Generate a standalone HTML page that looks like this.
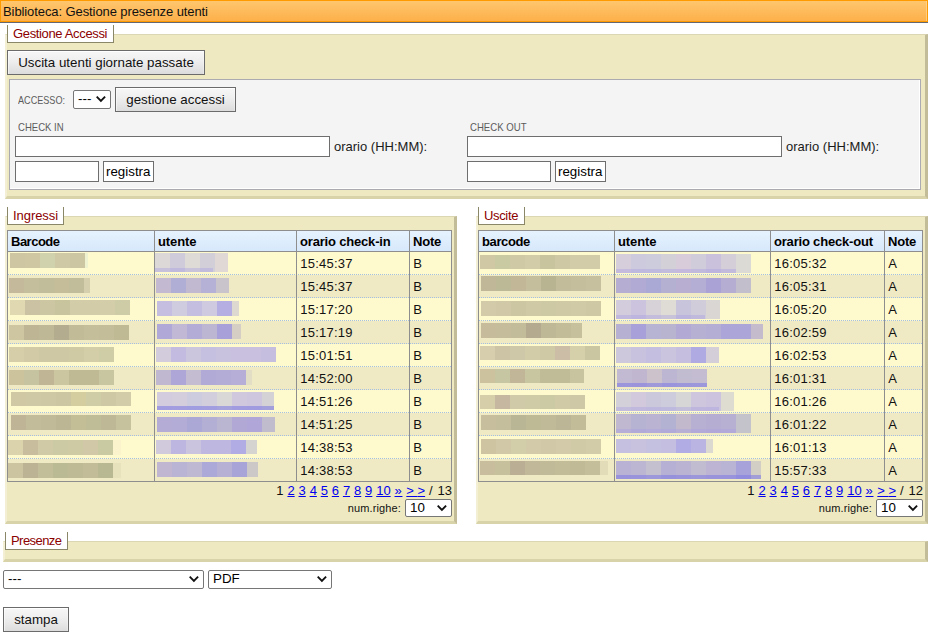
<!DOCTYPE html>
<html lang="it"><head><meta charset="utf-8"><title>Biblioteca: Gestione presenze utenti</title>
<style>
html,body{margin:0;padding:0;background:#fff;}
body{width:928px;height:637px;position:relative;overflow:hidden;font-family:"Liberation Sans",sans-serif;font-size:13px;color:#000;}
div,span,a{box-sizing:content-box}
.abs,.fs,.lg,.btn,.inp,.sel,.lbl,.tbl,.th,.ht,.row,.tt,.bk,.vd,.pg,.nr,.txt{position:absolute}
#hdr{position:absolute;left:0;top:0;width:926px;height:20px;border:1px solid #ff9a00;box-shadow:0 1px 0 #646870, inset -1px 0 0 rgba(255,220,160,.6);background:linear-gradient(#ffc66e,#fdb04a);}
#hdr span{position:absolute;left:2px;top:3px;font-size:13px;line-height:15px;letter-spacing:-0.09px;color:#111}
.fs{background:#eee9c1;border-style:solid;border-width:1px 3px 3px 2px;border-color:#dcd7b3 #c3bc98 #d9d3a9 #f3efd4;}
.lg{background:#fff;border:1px solid #8a8668;border-top:none;height:17px;font-size:13px;line-height:15px;color:#8b0000;white-space:nowrap}
.lg span{position:absolute;left:5px;top:1px}
.btn{border:1px solid #6b6b6b;background:linear-gradient(#f7f7f7,#eeeeee 45%,#dcdcdc);box-shadow:inset 0 1px 0 rgba(255,255,255,.9),inset 1px 0 0 rgba(255,255,255,.5),inset -1px 0 0 rgba(255,255,255,.3);font-size:13.333px;line-height:15px;text-align:center;color:#111;white-space:nowrap}
.inp{background:#fff;border:1px solid #6e6e6e;height:19px}
.inp span{position:absolute;left:2px;top:2px;font-size:13.333px;line-height:15px}
.sel{background:#fff;border:1px solid #767676;border-radius:2px;font-size:13.333px;line-height:15px}
.sel span{position:absolute;top:0px}
.ar{position:absolute;right:4px;top:5px;width:10px;height:6px;fill:none;stroke:#111;stroke-width:1.85;overflow:visible}
.lbl{font-size:11px;line-height:13px;color:#5c5c5c;white-space:nowrap;transform-origin:0 0}
.txt{font-size:13px;line-height:15px;color:#1a1a1a;white-space:nowrap}
#panel{position:absolute;left:9px;top:79px;width:910px;height:109px;border:1px solid #aaaab0;background:#f4f4f4;box-shadow:inset -1px -1px 0 #fff}
.tbl{border:1px solid #8e8e8e;background:#fff8cc;overflow:hidden}
.th{background:linear-gradient(#e6f2fe,#d7e8fb);border-bottom:1px solid #8e8e8e}
.ht{font-weight:bold;font-size:13px;line-height:15px;white-space:nowrap}
.row{left:0;height:22px;border-bottom:1px dotted #a4bfe2}
.row.last{border-bottom:none}
.ry{background:#fff9ce}
.rb{background:#f0eac4}
.tt{font-size:13px;line-height:15px;white-space:nowrap;color:#111;letter-spacing:.24px;margin-left:.2px}
.vd{top:0;width:1px;height:250px;background:#8e8e8e}
.pg{font-size:13px;line-height:15px;white-space:nowrap;color:#111;word-spacing:0.24px}
.pg a{color:#0000ee;text-decoration:underline}
.nr{font-size:11px;line-height:13px;white-space:nowrap;color:#111;letter-spacing:.12px}
</style></head><body>
<div id="hdr"><span>Biblioteca: Gestione presenze utenti</span></div>

<div class="fs" style="left:5px;top:34px;width:918px;height:161px"></div>
<div class="lg" style="left:7px;top:25px;width:105px"><span style="letter-spacing:-0.35px">Gestione Accessi</span></div>
<div class="btn" style="left:7px;top:50px;width:196px;height:23px"><span style="position:relative;top:4px">Uscita utenti giornate passate</span></div>
<div id="panel"></div>
<div class="lbl" style="left:18px;top:94px;transform:scaleX(.827)">ACCESSO:</div>
<div class="sel" style="left:73px;top:90px;width:36px;height:17px"><span style="left:4px">---</span><svg class="ar" viewBox="0 0 10 6"><path d="M0.7 0.7 L4.9 5 L9.1 0.7"/></svg></div>
<div class="btn" style="left:115px;top:87px;width:119px;height:23px"><span style="position:relative;top:4px">gestione accessi</span></div>

<div class="lbl" style="left:18px;top:121px;transform:scaleX(.868)">CHECK IN</div>
<div class="inp" style="left:15px;top:136px;width:313px"></div>
<div class="txt" style="left:334px;top:139px">orario (HH:MM):</div>
<div class="inp" style="left:15px;top:161px;width:82px"></div>
<div class="inp" style="left:103px;top:161px;width:49px"><span>registra</span></div>

<div class="lbl" style="left:470px;top:121px;transform:scaleX(.872)">CHECK OUT</div>
<div class="inp" style="left:467px;top:136px;width:313px"></div>
<div class="txt" style="left:786px;top:139px">orario (HH:MM):</div>
<div class="inp" style="left:467px;top:161px;width:82px"></div>
<div class="inp" style="left:555px;top:161px;width:49px"><span>registra</span></div>

<div class="fs" style="left:5px;top:216px;width:447px;height:304px"></div>
<div class="lg" style="left:7px;top:207px;width:55px"><span style="letter-spacing:-0.06px">Ingressi</span></div>
<div class="tbl" style="left:7px;top:230px;width:443px;height:250px">
<div class="th" style="left:0;top:0;width:443px;height:20px"></div>
<div class="ht" style="left:3px;top:3px;letter-spacing:-0.5px">Barcode</div>
<div class="ht" style="left:150px;top:3px;letter-spacing:-0.08px">utente</div>
<div class="ht" style="left:292px;top:3px;letter-spacing:-0.18px">orario check-in</div>
<div class="ht" style="left:405px;top:3px;letter-spacing:-0.22px">Note</div>
<div class="row ry" style="top:21px;width:443px"></div>
<div class="tt" style="left:292px;top:25px">15:45:37</div>
<div class="tt" style="left:405px;top:25px">B</div>
<div class="bk" style="left:2px;top:22px;width:75px;height:15px;background:linear-gradient(90deg,#cec5a3 0px,#cec5a3 15px,#cfc7a2 15px,#cfc7a2 30px,#d0d1ad 30px,#d0d1ad 45px,#cfc9a5 45px,#cfc9a5 60px,#cdc6a2 60px,#cdc6a2 75px)"></div>
<div class="bk" style="left:77px;top:22px;width:3px;height:15px;background:#eef2ce"></div>
<div class="bk" style="left:147px;top:22px;width:73px;height:19px;background:linear-gradient(90deg,rgba(170,160,225,.42) 58px,transparent 58px) 0 15px/100% 4px no-repeat,linear-gradient(90deg,#ddd8d8 0px,#ddd8d8 15px,#cfcbdb 15px,#cfcbdb 30px,#dedbd6 30px,#dedbd6 45px,#d2cfd9 45px,#d2cfd9 60px,#e0d8d4 60px,#e0d8d4 73px)"></div>
<div class="row rb" style="top:44px;width:443px"></div>
<div class="tt" style="left:292px;top:48px">15:45:37</div>
<div class="tt" style="left:405px;top:48px">B</div>
<div class="bk" style="left:1px;top:47px;width:81px;height:15px;background:linear-gradient(90deg,#c4b99a 0px,#c4b99a 15px,#c4be9c 15px,#c4be9c 30px,#c1bc9a 30px,#c1bc9a 45px,#c5bc99 45px,#c5bc99 60px,#c1bc9a 60px,#c1bc9a 75px,#d6cfae 75px,#d6cfae 81px)"></div>
<div class="bk" style="left:148px;top:47px;width:73px;height:15px;background:linear-gradient(90deg,#c3b9d0 0px,#c3b9d0 15px,#b0aed4 15px,#b0aed4 30px,#c1b9d0 30px,#c1b9d0 45px,#b4b0d6 45px,#b4b0d6 60px,#c9c4cc 60px,#c9c4cc 73px)"></div>
<div class="row ry" style="top:67px;width:443px"></div>
<div class="tt" style="left:292px;top:71px">15:17:20</div>
<div class="tt" style="left:405px;top:71px">B</div>
<div class="bk" style="left:2px;top:69px;width:120px;height:15px;background:linear-gradient(90deg,#dfd8b0 0px,#dfd8b0 15px,#cac2a2 15px,#cac2a2 30px,#ccc6a2 30px,#ccc6a2 45px,#c8c49e 45px,#c8c49e 60px,#d2cca8 60px,#d2cca8 75px,#d2cca8 75px,#d2cca8 90px,#d3cda9 90px,#d3cda9 105px,#cdcca6 105px,#cdcca6 120px)"></div>
<div class="bk" style="left:149px;top:70px;width:82px;height:15px;background:linear-gradient(90deg,#c5bee0 0px,#c5bee0 15px,#d0ccdf 15px,#d0ccdf 30px,#c4bee0 30px,#c4bee0 45px,#cfcadf 45px,#cfcadf 60px,#b5aee2 60px,#b5aee2 75px,#ddd8d0 75px,#ddd8d0 82px)"></div>
<div class="row rb" style="top:90px;width:443px"></div>
<div class="tt" style="left:292px;top:94px">15:17:19</div>
<div class="tt" style="left:405px;top:94px">B</div>
<div class="bk" style="left:1px;top:94px;width:120px;height:15px;background:linear-gradient(90deg,#cdc6a0 0px,#cdc6a0 15px,#bdb594 15px,#bdb594 30px,#bfb896 30px,#bfb896 45px,#b4ac8e 45px,#b4ac8e 60px,#c2bb98 60px,#c2bb98 75px,#c5be9b 75px,#c5be9b 90px,#c4bd9a 90px,#c4bd9a 105px,#bfb994 105px,#bfb994 120px)"></div>
<div class="bk" style="left:149px;top:93px;width:84px;height:15px;background:linear-gradient(90deg,#b0a8d6 0px,#b0a8d6 15px,#c0b8d4 15px,#c0b8d4 30px,#b2acd6 30px,#b2acd6 45px,#bdb6d2 45px,#bdb6d2 60px,#a8a0d8 60px,#a8a0d8 75px,#d4cec4 75px,#d4cec4 84px)"></div>
<div class="row ry" style="top:113px;width:443px"></div>
<div class="tt" style="left:292px;top:117px">15:01:51</div>
<div class="tt" style="left:405px;top:117px">B</div>
<div class="bk" style="left:1px;top:116px;width:105px;height:15px;background:linear-gradient(90deg,#d6cea8 0px,#d6cea8 15px,#d2caa6 15px,#d2caa6 30px,#cfc8a4 30px,#cfc8a4 45px,#cfc8a4 45px,#cfc8a4 60px,#d0caa4 60px,#d0caa4 75px,#d3cda8 75px,#d3cda8 90px,#cfcda6 90px,#cfcda6 105px)"></div>
<div class="bk" style="left:148px;top:116px;width:120px;height:15px;background:linear-gradient(90deg,#d2ccdc 0px,#d2ccdc 15px,#c4bce0 15px,#c4bce0 30px,#cbc5de 30px,#cbc5de 45px,#c6c0e0 45px,#c6c0e0 60px,#c8c2df 60px,#c8c2df 75px,#c8c0de 75px,#c8c0de 90px,#c8c0de 90px,#c8c0de 105px,#c6bede 105px,#c6bede 120px)"></div>
<div class="row rb" style="top:136px;width:443px"></div>
<div class="tt" style="left:292px;top:140px">14:52:00</div>
<div class="tt" style="left:405px;top:140px">B</div>
<div class="bk" style="left:1px;top:139px;width:105px;height:15px;background:linear-gradient(90deg,#ccc29c 0px,#ccc29c 15px,#c6c4a0 15px,#c6c4a0 30px,#c0b594 30px,#c0b594 45px,#ccc6a0 45px,#ccc6a0 60px,#bfba94 60px,#bfba94 75px,#bfba94 75px,#bfba94 90px,#c8c6a0 90px,#c8c6a0 105px)"></div>
<div class="bk" style="left:148px;top:139px;width:90px;height:15px;background:linear-gradient(90deg,#c0b8d0 0px,#c0b8d0 15px,#aea6d6 15px,#aea6d6 30px,#c4bcd0 30px,#c4bcd0 45px,#b2aad6 45px,#b2aad6 60px,#b2acd6 60px,#b2acd6 75px,#b6aed6 75px,#b6aed6 90px)"></div>
<div class="bk" style="left:238px;top:139px;width:6px;height:15px;background:#e2dec6"></div>
<div class="row ry" style="top:159px;width:443px"></div>
<div class="tt" style="left:292px;top:163px">14:51:26</div>
<div class="tt" style="left:405px;top:163px">B</div>
<div class="bk" style="left:3px;top:161px;width:120px;height:14px;background:linear-gradient(90deg,#d0c8a4 0px,#d0c8a4 15px,#cfc9a6 15px,#cfc9a6 30px,#cec8a4 30px,#cec8a4 45px,#cdc6a2 45px,#cdc6a2 60px,#d3cda0 60px,#d3cda0 75px,#cfcda6 75px,#cfcda6 90px,#cec8a4 90px,#cec8a4 105px,#d2cca8 105px,#d2cca8 120px)"></div>
<div class="bk" style="left:149px;top:161px;width:117px;height:18px;background:linear-gradient(90deg,rgba(130,125,225,.6) 117px,transparent 117px) 0 14px/100% 4px no-repeat,linear-gradient(90deg,#d2ccde 0px,#d2ccde 15px,#d4cedc 15px,#d4cedc 30px,#ccccde 30px,#ccccde 45px,#d2cedc 45px,#d2cedc 60px,#dad8d6 60px,#dad8d6 75px,#d0c8dc 75px,#d0c8dc 90px,#cec6de 90px,#cec6de 105px,#d4d2d4 105px,#d4d2d4 117px)"></div>
<div class="row rb" style="top:182px;width:443px"></div>
<div class="tt" style="left:292px;top:186px">14:51:25</div>
<div class="tt" style="left:405px;top:186px">B</div>
<div class="bk" style="left:3px;top:184px;width:120px;height:15px;background:linear-gradient(90deg,#c0b496 0px,#c0b496 15px,#c2bc9a 15px,#c2bc9a 30px,#c0ba98 30px,#c0ba98 45px,#bcb694 45px,#bcb694 60px,#c4be96 60px,#c4be96 75px,#bfbd98 75px,#bfbd98 90px,#beb896 90px,#beb896 105px,#c6c29e 105px,#c6c29e 120px)"></div>
<div class="bk" style="left:149px;top:186px;width:118px;height:15px;background:linear-gradient(90deg,#b4acd4 0px,#b4acd4 15px,#b2acd6 15px,#b2acd6 30px,#aca8d6 30px,#aca8d6 45px,#b2aed4 45px,#b2aed4 60px,#bab6d2 60px,#bab6d2 75px,#b2a8d6 75px,#b2a8d6 90px,#b0a6d8 90px,#b0a6d8 105px,#c0bcce 105px,#c0bcce 118px)"></div>
<div class="row ry" style="top:205px;width:443px"></div>
<div class="tt" style="left:292px;top:209px">14:38:53</div>
<div class="tt" style="left:405px;top:209px">B</div>
<div class="bk" style="left:0px;top:209px;width:105px;height:15px;background:linear-gradient(90deg,#dad3ac 0px,#dad3ac 15px,#c8be9e 15px,#c8be9e 30px,#d0caa6 30px,#d0caa6 45px,#cccaa4 45px,#cccaa4 60px,#cecaa4 60px,#cecaa4 75px,#d0c8a6 75px,#d0c8a6 90px,#cacaa2 90px,#cacaa2 105px)"></div>
<div class="bk" style="left:105px;top:209px;width:8px;height:15px;background:#fbf3cc"></div>
<div class="bk" style="left:148px;top:209px;width:101px;height:14px;background:linear-gradient(90deg,#d0cadc 0px,#d0cadc 15px,#bcb6e0 15px,#bcb6e0 30px,#cac4de 30px,#cac4de 45px,#beb8e0 45px,#beb8e0 60px,#beb8e0 60px,#beb8e0 75px,#b2ace4 75px,#b2ace4 90px,#d6d4d0 90px,#d6d4d0 101px)"></div>
<div class="row rb last" style="top:228px;width:443px"></div>
<div class="tt" style="left:292px;top:232px">14:38:53</div>
<div class="tt" style="left:405px;top:232px">B</div>
<div class="bk" style="left:0px;top:232px;width:105px;height:15px;background:linear-gradient(90deg,#ccc4a0 0px,#ccc4a0 15px,#bcb294 15px,#bcb294 30px,#c2be9a 30px,#c2be9a 45px,#baba94 45px,#baba94 60px,#bfba96 60px,#bfba96 75px,#c2bc98 75px,#c2bc98 90px,#b8b892 90px,#b8b892 105px)"></div>
<div class="bk" style="left:105px;top:232px;width:8px;height:15px;background:#e8e2bc"></div>
<div class="bk" style="left:149px;top:231px;width:101px;height:15px;background:linear-gradient(90deg,#c0b6d2 0px,#c0b6d2 15px,#bab4d4 15px,#bab4d4 30px,#beb8d2 30px,#beb8d2 45px,#aca8d8 45px,#aca8d8 60px,#b6b0d4 60px,#b6b0d4 75px,#a8a4d8 75px,#a8a4d8 90px,#ccc8c8 90px,#ccc8c8 101px)"></div>
<div class="vd" style="left:146px"></div>
<div class="vd" style="left:288px"></div>
<div class="vd" style="left:401px"></div>
</div>
<div class="pg" style="right:476px;top:483px">1 <a>2</a> <a>3</a> <a>4</a> <a>5</a> <a>6</a> <a>7</a> <a>8</a> <a>9</a> <a>10</a> <a style="letter-spacing:.7px">&raquo;</a> <a><span style="letter-spacing:3.6px">&gt;</span>&gt;</a> <span style="letter-spacing:1.1px">/</span> 13</div><div class="nr" style="right:527px;top:502px">num.righe:</div><div class="sel" style="left:405px;top:499px;width:45px;height:16px"><span style="left:4px">10</span><svg class="ar" viewBox="0 0 10 6"><path d="M0.7 0.7 L4.9 5 L9.1 0.7"/></svg></div>

<div class="fs" style="left:476px;top:216px;width:447px;height:304px"></div>
<div class="lg" style="left:478px;top:207px;width:45px"><span style="letter-spacing:-0.35px">Uscite</span></div>
<div class="tbl" style="left:478px;top:230px;width:443px;height:250px">
<div class="th" style="left:0;top:0;width:443px;height:20px"></div>
<div class="ht" style="left:3px;top:3px;letter-spacing:-0.37px">barcode</div>
<div class="ht" style="left:139px;top:3px;letter-spacing:-0.08px">utente</div>
<div class="ht" style="left:295px;top:3px;letter-spacing:-0.19px">orario check-out</div>
<div class="ht" style="left:409px;top:3px;letter-spacing:-0.22px">Note</div>
<div class="row ry" style="top:21px;width:443px"></div>
<div class="tt" style="left:295px;top:25px">16:05:32</div>
<div class="tt" style="left:409px;top:25px">A</div>
<div class="bk" style="left:1px;top:24px;width:120px;height:14px;background:linear-gradient(90deg,#d0c8a4 0px,#d0c8a4 15px,#cacaa2 15px,#cacaa2 30px,#cfc9a6 30px,#cfc9a6 45px,#d2cca8 45px,#d2cca8 60px,#c8c49e 60px,#c8c49e 75px,#cec8a4 75px,#cec8a4 90px,#d2cca8 90px,#d2cca8 105px,#d2cca8 105px,#d2cca8 120px)"></div>
<div class="bk" style="left:137px;top:23px;width:135px;height:19px;background:linear-gradient(90deg,rgba(170,160,225,.42) 120px,transparent 120px) 0 15px/100% 4px no-repeat,linear-gradient(90deg,#d6ceda 0px,#d6ceda 15px,#cccadc 15px,#cccadc 30px,#ccccdc 30px,#ccccdc 45px,#d4d0d8 45px,#d4d0d8 60px,#d8ccda 60px,#d8ccda 75px,#d0ccda 75px,#d0ccda 90px,#cac2dc 90px,#cac2dc 105px,#d4ced8 105px,#d4ced8 120px,#dcdad4 120px,#dcdad4 135px)"></div>
<div class="row rb" style="top:44px;width:443px"></div>
<div class="tt" style="left:295px;top:48px">16:05:31</div>
<div class="tt" style="left:409px;top:48px">A</div>
<div class="bk" style="left:2px;top:45px;width:120px;height:15px;background:linear-gradient(90deg,#c0b698 0px,#c0b698 15px,#bcba96 15px,#bcba96 30px,#c2b898 30px,#c2b898 45px,#c4be9c 45px,#c4be9c 60px,#b8b492 60px,#b8b492 75px,#c2bc9a 75px,#c2bc9a 90px,#c4be9c 90px,#c4be9c 105px,#c6c09e 105px,#c6c09e 120px)"></div>
<div class="bk" style="left:137px;top:47px;width:135px;height:15px;background:linear-gradient(90deg,#b6aed2 0px,#b6aed2 15px,#b0aad4 15px,#b0aad4 30px,#aaa8d4 30px,#aaa8d4 45px,#b4b0d2 45px,#b4b0d2 60px,#b8aed2 60px,#b8aed2 75px,#b4aed4 75px,#b4aed4 90px,#aaa2d4 90px,#aaa2d4 105px,#b6aed2 105px,#b6aed2 120px,#c2becc 120px,#c2becc 135px)"></div>
<div class="row ry" style="top:67px;width:443px"></div>
<div class="tt" style="left:295px;top:71px">16:05:20</div>
<div class="tt" style="left:409px;top:71px">A</div>
<div class="bk" style="left:2px;top:70px;width:120px;height:15px;background:linear-gradient(90deg,#d2caa8 0px,#d2caa8 15px,#d0c8a6 15px,#d0c8a6 30px,#ccc6a2 30px,#ccc6a2 45px,#cfc9a6 45px,#cfc9a6 60px,#cdc9a4 60px,#cdc9a4 75px,#cfc9a6 75px,#cfc9a6 90px,#d0caa6 90px,#d0caa6 105px,#cec8a4 105px,#cec8a4 120px)"></div>
<div class="bk" style="left:137px;top:69px;width:104px;height:19px;background:linear-gradient(90deg,rgba(170,160,225,.42) 89px,transparent 89px) 0 15px/100% 4px no-repeat,linear-gradient(90deg,#d2ccdc 0px,#d2ccdc 15px,#ccc4de 15px,#ccc4de 30px,#d6d2d8 30px,#d6d2d8 45px,#dedcd4 45px,#dedcd4 60px,#c8c4dc 60px,#c8c4dc 75px,#d0ccda 75px,#d0ccda 90px,#dad6d4 90px,#dad6d4 104px)"></div>
<div class="row rb" style="top:90px;width:443px"></div>
<div class="tt" style="left:295px;top:94px">16:02:59</div>
<div class="tt" style="left:409px;top:94px">A</div>
<div class="bk" style="left:2px;top:92px;width:101px;height:15px;background:linear-gradient(90deg,#c6bc9c 0px,#c6bc9c 15px,#c4bc9a 15px,#c4bc9a 30px,#c2bc9a 30px,#c2bc9a 45px,#b4aa90 45px,#b4aa90 60px,#beb896 60px,#beb896 75px,#c2bc98 75px,#c2bc98 90px,#c6c09c 90px,#c6c09c 101px)"></div>
<div class="bk" style="left:137px;top:93px;width:147px;height:15px;background:linear-gradient(90deg,#b6b0d2 0px,#b6b0d2 15px,#a8a0d8 15px,#a8a0d8 30px,#b6b4d2 30px,#b6b4d2 45px,#b8b4d0 45px,#b8b4d0 60px,#b2aad4 60px,#b2aad4 75px,#b6b0d2 75px,#b6b0d2 90px,#b4aed4 90px,#b4aed4 105px,#aca6d8 105px,#aca6d8 120px,#aca6d8 120px,#aca6d8 135px,#c4bccc 135px,#c4bccc 147px)"></div>
<div class="row ry" style="top:113px;width:443px"></div>
<div class="tt" style="left:295px;top:117px">16:02:53</div>
<div class="tt" style="left:409px;top:117px">A</div>
<div class="bk" style="left:1px;top:115px;width:120px;height:14px;background:linear-gradient(90deg,#d6ceac 0px,#d6ceac 15px,#ccc4a4 15px,#ccc4a4 30px,#cec8a8 30px,#cec8a8 45px,#d2cca8 45px,#d2cca8 60px,#cfc9a6 60px,#cfc9a6 75px,#ccbea6 75px,#ccbea6 90px,#d6d0aa 90px,#d6d0aa 105px,#cac6a2 105px,#cac6a2 120px)"></div>
<div class="bk" style="left:137px;top:116px;width:103px;height:16px;background:linear-gradient(90deg,#cec8dc 0px,#cec8dc 15px,#c8c2de 15px,#c8c2de 30px,#c4bee0 30px,#c4bee0 45px,#cac4de 45px,#cac4de 60px,#c6bede 60px,#c6bede 75px,#b0aae2 75px,#b0aae2 90px,#d4ced8 90px,#d4ced8 103px)"></div>
<div class="row rb" style="top:136px;width:443px"></div>
<div class="tt" style="left:295px;top:140px">16:01:31</div>
<div class="tt" style="left:409px;top:140px">A</div>
<div class="bk" style="left:1px;top:138px;width:104px;height:14px;background:linear-gradient(90deg,#ccc29e 0px,#ccc29e 15px,#c6c6a2 15px,#c6c6a2 30px,#c2b698 30px,#c2b698 45px,#c8c6a0 45px,#c8c6a0 60px,#c0bc98 60px,#c0bc98 75px,#c0bc98 75px,#c0bc98 90px,#c8c4a0 90px,#c8c4a0 104px)"></div>
<div class="bk" style="left:138px;top:138px;width:90px;height:18px;background:linear-gradient(90deg,rgba(130,125,225,.6) 90px,transparent 90px) 0 14px/100% 4px no-repeat,linear-gradient(90deg,#c2bad2 0px,#c2bad2 15px,#c0b6d0 15px,#c0b6d0 30px,#ccc2cc 30px,#ccc2cc 45px,#bcb6d2 45px,#bcb6d2 60px,#c2bcd0 60px,#c2bcd0 75px,#c4bcd0 75px,#c4bcd0 90px)"></div>
<div class="row ry" style="top:159px;width:443px"></div>
<div class="tt" style="left:295px;top:163px">16:01:26</div>
<div class="tt" style="left:409px;top:163px">A</div>
<div class="bk" style="left:1px;top:164px;width:105px;height:14px;background:linear-gradient(90deg,#d6cea8 0px,#d6cea8 15px,#c6b8a0 15px,#c6b8a0 30px,#d0caa8 30px,#d0caa8 45px,#cfcba6 45px,#cfcba6 60px,#cccaa4 60px,#cccaa4 75px,#d0caa6 75px,#d0caa6 90px,#cec8a6 90px,#cec8a6 105px)"></div>
<div class="bk" style="left:137px;top:161px;width:118px;height:19px;background:linear-gradient(90deg,rgba(170,160,225,.42) 103px,transparent 103px) 0 15px/100% 4px no-repeat,linear-gradient(90deg,#d4d0da 0px,#d4d0da 15px,#d2cadc 15px,#d2cadc 30px,#ccc8dc 30px,#ccc8dc 45px,#ccccdc 45px,#ccccdc 60px,#d6d6d6 60px,#d6d6d6 75px,#cec6dc 75px,#cec6dc 90px,#ccc4de 90px,#ccc4de 105px,#dedcd0 105px,#dedcd0 118px)"></div>
<div class="row rb" style="top:182px;width:443px"></div>
<div class="tt" style="left:295px;top:186px">16:01:22</div>
<div class="tt" style="left:409px;top:186px">A</div>
<div class="bk" style="left:2px;top:184px;width:105px;height:15px;background:linear-gradient(90deg,#c6be9c 0px,#c6be9c 15px,#c4be9c 15px,#c4be9c 30px,#b8b694 30px,#b8b694 45px,#beba96 45px,#beba96 60px,#c0ba98 60px,#c0ba98 75px,#bcb696 75px,#bcb696 90px,#c2bc98 90px,#c2bc98 105px)"></div>
<div class="bk" style="left:137px;top:183px;width:135px;height:19px;background:linear-gradient(90deg,rgba(170,160,225,.42) 120px,transparent 120px) 0 15px/100% 4px no-repeat,linear-gradient(90deg,#c0b8d0 0px,#c0b8d0 15px,#b6b2d2 15px,#b6b2d2 30px,#bab4d2 30px,#bab4d2 45px,#b4b2d2 45px,#b4b2d2 60px,#c2bacc 60px,#c2bacc 75px,#b8b0d2 75px,#b8b0d2 90px,#b6aed2 90px,#b6aed2 105px,#b8b0d2 105px,#b8b0d2 120px,#c4c2ca 120px,#c4c2ca 135px)"></div>
<div class="row ry" style="top:205px;width:443px"></div>
<div class="tt" style="left:295px;top:209px">16:01:13</div>
<div class="tt" style="left:409px;top:209px">A</div>
<div class="bk" style="left:2px;top:208px;width:120px;height:15px;background:linear-gradient(90deg,#cec4a2 0px,#cec4a2 15px,#d0c8a6 15px,#d0c8a6 30px,#d2ceaa 30px,#d2ceaa 45px,#d2caa8 45px,#d2caa8 60px,#d0c8a6 60px,#d0c8a6 75px,#d2caa8 75px,#d2caa8 90px,#d0caa6 90px,#d0caa6 105px,#d2cca8 105px,#d2cca8 120px)"></div>
<div class="bk" style="left:137px;top:208px;width:97px;height:14px;background:linear-gradient(90deg,#c6c0e0 0px,#c6c0e0 15px,#c8c2de 15px,#c8c2de 30px,#c4c0e0 30px,#c4c0e0 45px,#c4bee0 45px,#c4bee0 60px,#b2ace4 60px,#b2ace4 75px,#bab4e2 75px,#bab4e2 90px,#dcdad0 90px,#dcdad0 97px)"></div>
<div class="row rb last" style="top:228px;width:443px"></div>
<div class="tt" style="left:295px;top:232px">15:57:33</div>
<div class="tt" style="left:409px;top:232px">A</div>
<div class="bk" style="left:1px;top:230px;width:120px;height:14px;background:linear-gradient(90deg,#c8be9e 0px,#c8be9e 15px,#c6c09c 15px,#c6c09c 30px,#baae94 30px,#baae94 45px,#c0b898 45px,#c0b898 60px,#c0ba98 60px,#c0ba98 75px,#c2bc98 75px,#c2bc98 90px,#c0ba96 90px,#c0ba96 105px,#c4be9a 105px,#c4be9a 120px)"></div>
<div class="bk" style="left:121px;top:230px;width:8px;height:14px;background:#e2dcb8"></div>
<div class="bk" style="left:137px;top:230px;width:145px;height:18px;background:linear-gradient(90deg,rgba(130,125,225,.6) 145px,transparent 145px) 0 14px/100% 4px no-repeat,linear-gradient(90deg,#bab2d4 0px,#bab2d4 15px,#bcb6d2 15px,#bcb6d2 30px,#c4c0d0 30px,#c4c0d0 45px,#b6b0d4 45px,#b6b0d4 60px,#bab4d2 60px,#bab4d2 75px,#c2bcd0 75px,#c2bcd0 90px,#bcb4d2 90px,#bcb4d2 105px,#bab4d4 105px,#bab4d4 120px,#a8a2da 120px,#a8a2da 135px,#d2cec6 135px,#d2cec6 145px)"></div>
<div class="vd" style="left:135px"></div>
<div class="vd" style="left:291px"></div>
<div class="vd" style="left:405px"></div>
</div>
<div class="pg" style="right:5px;top:483px">1 <a>2</a> <a>3</a> <a>4</a> <a>5</a> <a>6</a> <a>7</a> <a>8</a> <a>9</a> <a>10</a> <a style="letter-spacing:.7px">&raquo;</a> <a><span style="letter-spacing:3.6px">&gt;</span>&gt;</a> <span style="letter-spacing:1.1px">/</span> 12</div><div class="nr" style="right:56px;top:502px">num.righe:</div><div class="sel" style="left:876px;top:499px;width:45px;height:16px"><span style="left:4px">10</span><svg class="ar" viewBox="0 0 10 6"><path d="M0.7 0.7 L4.9 5 L9.1 0.7"/></svg></div>

<div class="fs" style="left:3px;top:541px;width:920px;height:17px"></div>
<div class="lg" style="left:5px;top:532px;width:61px"><span style="letter-spacing:-0.56px">Presenze</span></div>
<div class="sel" style="left:3px;top:570px;width:199px;height:17px"><span style="left:4px">---</span><svg class="ar" viewBox="0 0 10 6"><path d="M0.7 0.7 L4.9 5 L9.1 0.7"/></svg></div>
<div class="sel" style="left:208px;top:570px;width:122px;height:17px"><span style="left:4px">PDF</span><svg class="ar" viewBox="0 0 10 6"><path d="M0.7 0.7 L4.9 5 L9.1 0.7"/></svg></div>
<div class="btn" style="left:3px;top:607px;width:64px;height:23px"><span style="position:relative;top:4px">stampa</span></div>
</body></html>
